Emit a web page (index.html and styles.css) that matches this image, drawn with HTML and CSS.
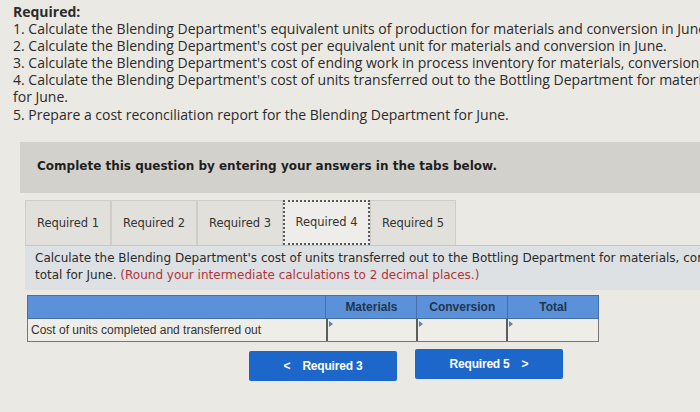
FILE: index.html
```html
<!DOCTYPE html>
<html>
<head>
<meta charset="utf-8">
<link rel="stylesheet" href="styles.css">
</head>
<body>
<div class="page">
  <div class="required">
    <div class="req-title">Required:</div>
    <div class="req-line">1. Calculate the Blending Department's equivalent units of production for materials and conversion in June.</div>
    <div class="req-line">2. Calculate the Blending Department's cost per equivalent unit for materials and conversion in June.</div>
    <div class="req-line">3. Calculate the Blending Department's cost of ending work in process inventory for materials, conversion, and in total for June.</div>
    <div class="req-line">4. Calculate the Blending Department's cost of units transferred out to the Bottling Department for materials, conversion, and in total</div>
    <div class="req-line">for June.</div>
    <div class="req-line">5. Prepare a cost reconciliation report for the Blending Department for June.</div>
  </div>

  <div class="complete">Complete this question by entering your answers in the tabs below.</div>

  <div class="tabs">
    <div class="tab">Required 1</div>
    <div class="tab">Required 2</div>
    <div class="tab">Required 3</div>
    <div class="tab active">Required 4</div>
    <div class="tab">Required 5</div>
  </div>

  <div class="panel">
    <div class="panel-text">Calculate the Blending Department's cost of units transferred out to the Bottling Department for materials, conversion, and in</div>
    <div class="panel-text">total for June. <span class="red">(Round your intermediate calculations to 2 decimal places.)</span></div>
  </div>

  <div class="table">
    <div class="row head">
      <div class="cell label"></div>
      <div class="cell num">Materials</div>
      <div class="cell num">Conversion</div>
      <div class="cell num">Total</div>
    </div>
    <div class="row body">
      <div class="cell label">Cost of units completed and transferred out</div>
      <div class="cell input"><span class="tri"></span></div>
      <div class="cell input"><span class="tri"></span></div>
      <div class="cell input"><span class="tri"></span></div>
    </div>
  </div>

  <div class="nav">
    <div class="btn prev"><span class="chev">&lt;</span>Required 3</div>
    <div class="btn next">Required 5<span class="chev">&gt;</span></div>
  </div>
</div>
</body>
</html>
```

FILE: styles.css
```css
html, body {
  margin: 0;
  padding: 0;
}
body {
  background: #ebe9e4;
  width: 700px;
  height: 412px;
  overflow: hidden;
}
.page {
  width: 700px;
  height: 412px;
  overflow: hidden;
}
.required {
  padding: 3px 0 0 13px;
  font-family: "Open Sans", sans-serif;
  font-size: 14px;
  line-height: 17.1px;
  color: #2b2b2b;
  white-space: nowrap;
}
.req-title {
  font-weight: 700;
}
.complete {
  margin: 19px 0 0 20px;
  height: 51px;
  box-sizing: border-box;
  padding: 17px 0 0 17px;
  background: #d3d1cc;
  font-family: "DejaVu Sans", Verdana, sans-serif;
  font-weight: 700;
  font-size: 12px;
  color: #1f1f1f;
  white-space: nowrap;
}
.tabs {
  display: flex;
  margin: 7px 0 0 25px;
  height: 45px;
}
.tab {
  width: 86px;
  box-sizing: border-box;
  border: 1px solid #cfcdc8;
  border-bottom: none;
  background: #e2e0db;
  display: flex;
  align-items: center;
  justify-content: center;
  font-family: "DejaVu Sans", Verdana, sans-serif;
  font-size: 11.5px;
  color: #333;
}
.tab.active {
  background: #efede9;
  border: 2px dotted #55585c;
  width: 87px;
}
.panel {
  margin-left: 25px;
  height: 45px;
  box-sizing: border-box;
  padding: 4px 0 0 10px;
  background: #dde1e3;
  border-top: 1px solid #c4c7ca;
  font-family: "DejaVu Sans", Verdana, sans-serif;
  font-size: 12px;
  line-height: 17px;
  color: #2a2a2a;
  white-space: nowrap;
}
.red {
  color: #b2333b;
}
.table {
  margin: 5px 0 0 27px;
  width: 572px;
  font-family: "Liberation Sans", Arial, sans-serif;
  font-size: 12px;
}
.row {
  display: flex;
}
.row.head {
  height: 24px;
  background: #5b91d9;
  border: 1px solid #4471ad;
  box-sizing: border-box;
}
.row.head .cell {
  border-left: 1px solid #4471ad;
  display: flex;
  align-items: center;
  justify-content: center;
  font-weight: 700;
  color: #22354f;
}
.row.head .cell.label {
  border-left: none;
}
.cell.label {
  width: 298px;
}
.cell.num, .cell.input {
  width: 90px;
}
.row.body {
  height: 23px;
  background: #efede8;
  border: 1px solid #75777a;
  border-top: none;
  box-sizing: border-box;
}
.row.body .cell.label {
  display: flex;
  align-items: center;
  padding-left: 3px;
  box-sizing: border-box;
  color: #333;
  font-size: 12px;
}
.row.body .cell.input {
  position: relative;
  border-left: 2px solid #5b5d60;
  box-sizing: border-box;
}
.tri {
  position: absolute;
  left: 1px;
  top: 2px;
  width: 0;
  height: 0;
  border-top: 3px solid transparent;
  border-bottom: 3px solid transparent;
  border-left: 4px solid #5b7fb8;
}
.nav {
  display: flex;
  gap: 18px;
  margin: 9px 0 0 249px;
}
.btn {
  width: 148px;
  height: 30px;
  background: #1c67c9;
  border-radius: 2px;
  display: flex;
  align-items: center;
  justify-content: center;
  font-family: "Liberation Sans", Arial, sans-serif;
  font-weight: 700;
  font-size: 12px;
  color: #fff;
  letter-spacing: -0.2px;
}
.btn.next {
  margin-top: -2px;
}
.prev .chev {
  margin-right: 12px;
}
.next .chev {
  margin-left: 12px;
}
```
